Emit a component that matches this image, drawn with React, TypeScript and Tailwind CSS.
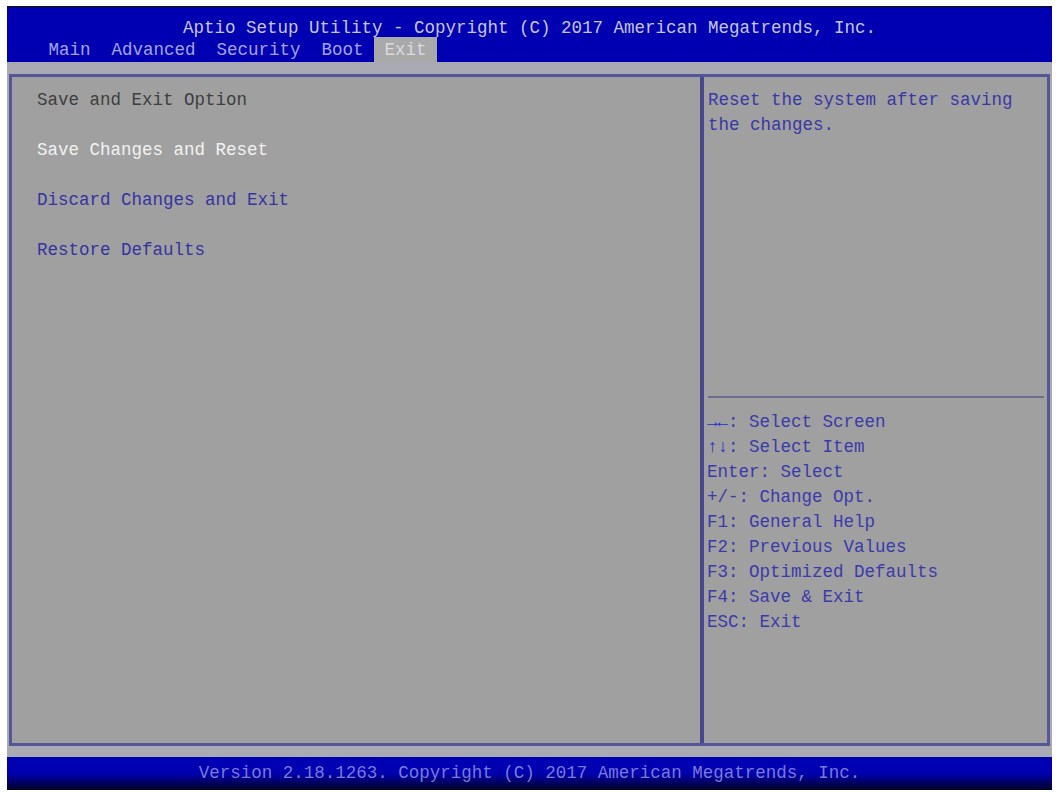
const tabs = ['Main', 'Advanced', 'Security', 'Boot', 'Exit'];
const activeTab = 'Exit';

type MenuItem = { label: string; kind: 'heading' | 'selected' | 'action' };

const menu: MenuItem[] = [
  { label: 'Save and Exit Option', kind: 'heading' },
  { label: 'Save Changes and Reset', kind: 'selected' },
  { label: 'Discard Changes and Exit', kind: 'action' },
  { label: 'Restore Defaults', kind: 'action' },
];

const keys: [string, string][] = [
  ['→←', ': Select Screen'],
  ['↑↓', ': Select Item'],
  ['', 'Enter: Select'],
  ['', '+/-: Change Opt.'],
  ['', 'F1: General Help'],
  ['', 'F2: Previous Values'],
  ['', 'F3: Optimized Defaults'],
  ['', 'F4: Save & Exit'],
  ['', 'ESC: Exit'],
];

const itemColor = {
  heading: 'text-[#3e3e3e]',
  selected: 'text-[#f2f2f2]',
  action: 'text-[#3434a2]',
};

export default function App() {
  return (
    <div className="w-[1056px] h-[793px] bg-white pt-[6px] pl-[7px] pr-[4px] pb-[3px] font-['Liberation_Mono',monospace] text-[17.5px] leading-[25px] whitespace-pre">
      <div className="h-[784px] flex flex-col bg-[#aaaab2]">
        {/* header: title + tab strip */}
        <div className="h-[56px] bg-[#0000b2] border-t-2 border-[#0a0a50] flex flex-col">
          <div className="h-[29px] pt-[10px] leading-[20px] text-center text-[#c6c6e2]">
            Aptio Setup Utility - Copyright (C) 2017 American Megatrends, Inc.
          </div>
          <div className="h-[25px] flex pl-[31px] leading-[27px]">
            {tabs.map((t) =>
              t === activeTab ? (
                <span key={t} className="px-[10.5px] bg-[#a9a9a9] text-[#dadae0]">
                  {t}
                </span>
              ) : (
                <span key={t} className="px-[10.5px] text-[#a4a4ec]">
                  {t}
                </span>
              )
            )}
          </div>
        </div>

        {/* main frame */}
        <div className="mt-[12px] mx-[2px] h-[672px] flex border-[3px] border-[#55559a] bg-[#a0a0a0]">
          <div className="w-[692px] pl-[25px] pt-[11px] border-r-4 border-[#48488c]">
            {menu.map((m, i) => (
              <div key={m.label} className={`${itemColor[m.kind]} ${i > 0 ? 'mt-[25px]' : ''}`}>
                {m.label}
              </div>
            ))}
          </div>

          <div className="flex-1 flex flex-col">
            <div className="h-[319px] pl-[4px] pt-[11px] text-[#3838a6]">
              <div>Reset the system after saving</div>
              <div>the changes.</div>
            </div>
            <div className="h-[2px] ml-[4px] mr-[3px] bg-[#6c6c90]" />
            <div className="pl-[3px] pt-[12px] text-[#3a3aaa]">
              {keys.map(([arrows, text]) => (
                <div key={arrows + text}>
                  {arrows && <span className="text-[#2a2ad0] font-bold">{arrows}</span>}
                  {text}
                </div>
              ))}
            </div>
          </div>
        </div>

        {/* footer */}
        <div className="mt-[11px] h-[33px] bg-gradient-to-b from-[#0000b4] via-[#0000b0] to-[#00002a] text-center text-[#7a7ad8] leading-[33px]">
          Version 2.18.1263. Copyright (C) 2017 American Megatrends, Inc.
        </div>
      </div>
    </div>
  );
}
